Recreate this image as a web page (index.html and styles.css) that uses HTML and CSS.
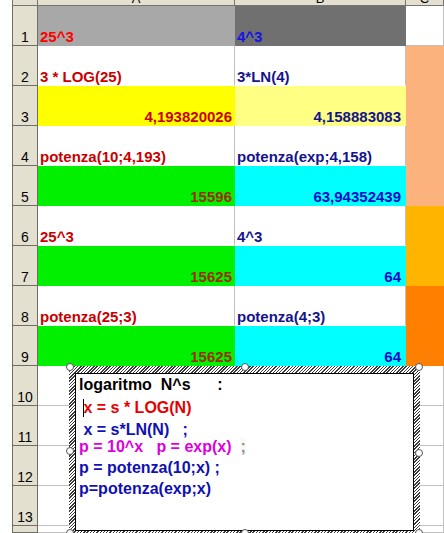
FILE: index.html
```html
<!DOCTYPE html>
<html>
<head>
<meta charset="utf-8">
<link rel="stylesheet" href="styles.css">
</head>
<body>
<div class="sheet">
  <div class="hd corner"></div>
  <div class="hd"><span>A</span></div>
  <div class="hd"><span>B</span></div>
  <div class="hd"><span>C</span></div>

  <div class="rh">1</div>
  <div class="c a fill gray t-red">25^3</div>
  <div class="c b fill dgray t-blue">4^3</div>
  <div class="c cc"></div>

  <div class="rh">2</div>
  <div class="c a nb t-dred">3 * LOG(25)</div>
  <div class="c b nb t-navy">3*LN(4)</div>
  <div class="c cc fill peach span4"></div>

  <div class="rh">3</div>
  <div class="c a r fill yellow t-dred">4,193820026</div>
  <div class="c b r fill lyellow t-navy">4,158883083</div>

  <div class="rh">4</div>
  <div class="c a nb t-dred">potenza(10;4,193)</div>
  <div class="c b nb t-navy">potenza(exp;4,158)</div>

  <div class="rh">5</div>
  <div class="c a r fill green t-brown">15596</div>
  <div class="c b r fill cyan t-nblue">63,94352439</div>

  <div class="rh">6</div>
  <div class="c a nb t-dred">25^3</div>
  <div class="c b nb t-navy">4^3</div>
  <div class="c cc fill orange span2"></div>

  <div class="rh">7</div>
  <div class="c a r fill green t-brown">15625</div>
  <div class="c b r fill cyan t-nblue">64</div>

  <div class="rh">8</div>
  <div class="c a nb t-dred">potenza(25;3)</div>
  <div class="c b nb t-navy">potenza(4;3)</div>
  <div class="c cc fill dorange span2"></div>

  <div class="rh">9</div>
  <div class="c a r fill green t-brown">15625</div>
  <div class="c b r fill cyan t-nblue">64</div>

  <div class="rh">10</div>
  <div class="c a"></div>
  <div class="c b"></div>
  <div class="c cc"></div>

  <div class="rh">11</div>
  <div class="c a"></div>
  <div class="c b"></div>
  <div class="c cc"></div>

  <div class="rh">12</div>
  <div class="c a"></div>
  <div class="c b"></div>
  <div class="c cc"></div>

  <div class="rh">13</div>
  <div class="c a"></div>
  <div class="c b"></div>
  <div class="c cc"></div>

  <div class="rh"></div>
  <div class="c a"></div>
  <div class="c b"></div>
  <div class="c cc"></div>

  <div class="textbox">
    <div class="tb-inner">
      <div class="ln l1 k">logaritmo  N^s      :</div>
      <div class="ln l2 red"> <span class="caret"></span>x = s * LOG(N)</div>
      <div class="ln l3 blue"> x = s*LN(N)   ;</div>
      <div class="ln l4 mag">p = 10^x   p = exp(x)  <span class="semi">;</span></div>
      <div class="ln l5 blue">p = potenza(10;x) ;</div>
      <div class="ln l6 blue">p=potenza(exp;x)</div>
    </div>
    <span class="hdl h-tl"></span>
    <span class="hdl h-tm"></span>
    <span class="hdl h-tr"></span>
    <span class="hdl h-ml"></span>
    <span class="hdl h-mr"></span>
    <span class="hdl h-bl"></span>
    <span class="hdl h-bm"></span>
    <span class="hdl h-br"></span>
  </div>
</div>
</body>
</html>
```

FILE: styles.css
```css
html, body {
  margin: 0;
  padding: 0;
  height: 533px;
  overflow: hidden;
  background: #ffffff;
}

.sheet {
  position: relative;
  display: grid;
  grid-template-columns: 26px 197px 171px 38px;
  grid-template-rows: 6px repeat(13, 40px) 7px;
  margin-left: 12px;
  font-family: "Liberation Sans", Arial, sans-serif;
}

/* headers */
.hd {
  background: #e4e0d0;
  border-right: 1px solid #76766e;
  border-bottom: 1px solid #76766e;
  box-sizing: border-box;
  overflow: hidden;
  display: flex;
  justify-content: center;
  align-items: flex-end;
  font-size: 13px;
  line-height: 13px;
  color: #000;
}
.corner {
  border-left: 1px solid #76766e;
}

.rh {
  grid-column: 1;
  background: #e4e0d0;
  border-left: 1px solid #6e6e66;
  border-right: 1px solid #6e6e66;
  border-bottom: 1px solid #6e6e66;
  box-sizing: border-box;
  display: flex;
  justify-content: center;
  align-items: flex-end;
  font-size: 14px;
  line-height: 16px;
  color: #000;
}

/* cells */
.c {
  border-right: 1px solid #c0c0c0;
  border-bottom: 1px solid #c0c0c0;
  box-sizing: border-box;
  display: flex;
  align-items: flex-end;
  padding: 0 3px 0 2px;
  font-weight: bold;
  font-size: 15px;
  line-height: 17px;
  white-space: nowrap;
  overflow: hidden;
}
.a { grid-column: 2; }
.b { grid-column: 3; }
.cc { grid-column: 4; }
.r { justify-content: flex-end; }
.a.r { padding-right: 2px; }
.b.r { padding-right: 4px; }
.nb { border-bottom-color: transparent; }
.span4 { grid-row: span 4; }
.span2 { grid-row: span 2; }

.fill { border-color: transparent; }
.gray { background: #a8a8a8; }
.dgray { background: #707070; }
.yellow { background: #ffff00; }
.lyellow { background: #ffff84; }
.green { background: #00f000; }
.cyan { background: #00ffff; }
.peach { background: #fbb27c; }
.orange { background: #ffb400; }
.dorange { background: #ff7f00; }

.t-red { color: #ff0000; }
.t-blue { color: #1414e6; }
.t-dred { color: #c80000; }
.t-navy { color: #14148c; }
.t-brown { color: #a02c00; }
.t-nblue { color: #0a0ac8; }

/* text box overlay */
.textbox {
  position: absolute;
  left: 57px;
  top: 366px;
  width: 351px;
  height: 167px;
  box-sizing: border-box;
  padding: 7px 6px 2px 6px;
  background: repeating-linear-gradient(135deg, #ffffff 0 1.3px, #3a3a3a 1.3px 2.3px);
}
.tb-inner {
  height: 100%;
  box-sizing: border-box;
  border: 1px solid #000;
  background: #fff;
  padding: 0 3px;
  font-weight: bold;
  font-size: 16px;
}
.ln {
  white-space: pre;
  height: 21px;
  line-height: 21px;
}
.l2 { margin-top: 2px; }
.l3 { margin-top: 1px; }
.l4 { margin-top: -4px; }
.k { color: #000; }
.red { color: #e60000; }
.blue { color: #1010b4; }
.mag { color: #dc00dc; }
.semi { color: #8a8ab4; background: #fafaf0; }
.caret {
  display: inline-block;
  width: 1px;
  height: 18px;
  margin-right: -1px;
  background: #000;
  vertical-align: -4px;
}

.hdl {
  position: absolute;
  width: 6px;
  height: 6px;
  border: 1px solid #555;
  border-radius: 50%;
  background: #fff;
}
.h-tl { left: -3px; top: -3px; }
.h-tm { left: 172px; top: -3px; }
.h-tr { right: -3px; top: -3px; }
.h-ml { left: -3px; top: 81px; }
.h-mr { right: -3px; top: 83px; }
.h-bl { left: -3px; bottom: -4px; }
.h-bm { left: 172px; bottom: -4px; }
.h-br { right: -3px; bottom: -4px; }
```
